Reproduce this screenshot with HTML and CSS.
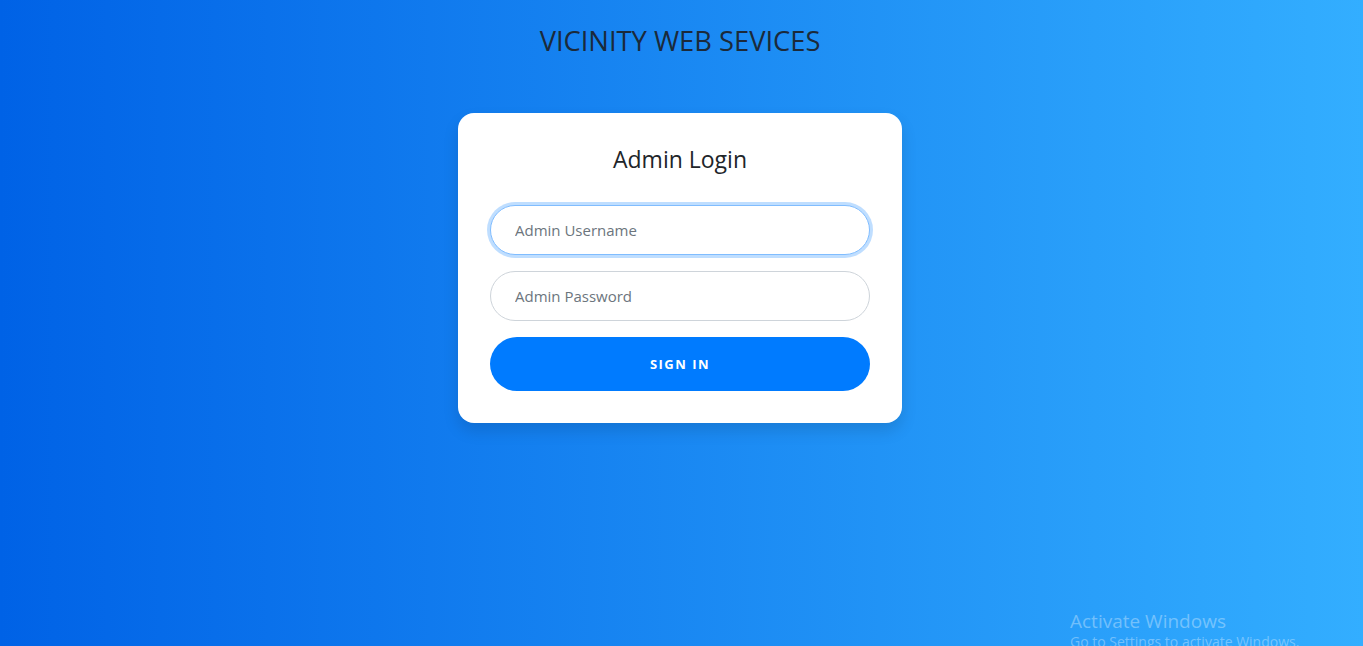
FILE: index.html
```html
<!DOCTYPE html>
<html lang="en">
<head>
<meta charset="utf-8">
<title>Admin Login</title>
<link rel="stylesheet" href="styles.css">
</head>
<body>
<div class="page">
  <h1 class="brand">VICINITY WEB SEVICES</h1>
  <div class="card">
    <h5 class="card-title">Admin Login</h5>
    <form class="form">
      <input class="field focused" type="text" placeholder="Admin Username">
      <input class="field" type="password" placeholder="Admin Password">
      <button class="btn" type="button">SIGN IN</button>
    </form>
  </div>
  <div class="watermark">
    <div class="wm-title">Activate Windows</div>
    <div class="wm-sub">Go to Settings to activate Windows.</div>
  </div>
</div>
</body>
</html>
```
FILE: styles.css
```css
* { box-sizing: border-box; }
html, body { margin: 0; height: 100%; }
body {
  background: linear-gradient(to right, #0062E6, #33AEFF);
  font-family: "Open Sans", "Noto Sans", sans-serif;
  color: #212529;
  overflow: hidden;
}
.page {
  height: 100%;
  display: flex;
  flex-direction: column;
  align-items: center;
  position: relative;
  padding-right: 3px;
}
.brand {
  margin: 23px 0 0;
  font-weight: 400;
  font-size: 27.3px;
  line-height: 36px;
  color: #1b2a3a;
  letter-spacing: 0;
}
.card {
  margin-top: 54px;
  width: 444px;
  background: #fff;
  border-radius: 16px;
  padding: 32px;
  box-shadow: 0 8px 16px rgba(0, 0, 0, 0.12);
}
.card-title {
  margin: 0 0 32px;
  text-align: center;
  font-size: 23px;
  font-weight: 400;
  line-height: 28px;
  color: #212529;
}
.form { display: flex; flex-direction: column; gap: 16px; }
.field {
  height: 50px;
  border: 1px solid #ced4da;
  border-radius: 160px;
  padding: 0 24px;
  font-family: inherit;
  font-size: 15px;
  color: #495057;
  background: #fff;
  outline: none;
}
.field::placeholder { color: #6c757d; }
.field.focused {
  border-color: #80bdff;
  box-shadow: 0 0 0 3px rgba(0, 123, 255, 0.25);
}
.btn {
  height: 54px;
  border: none;
  border-radius: 160px;
  background: #007bff;
  color: #fff;
  font-family: inherit;
  font-weight: 700;
  font-size: 13px;
  letter-spacing: 1.5px;
  cursor: pointer;
}
.watermark {
  position: absolute;
  left: 1070px;
  top: 609px;
  color: rgba(255, 255, 255, 0.35);
  font-family: "Open Sans", sans-serif;
}
.wm-title { font-size: 19px; line-height: 24px; }
.wm-sub { font-size: 14px; line-height: 18px; white-space: nowrap; }
```
